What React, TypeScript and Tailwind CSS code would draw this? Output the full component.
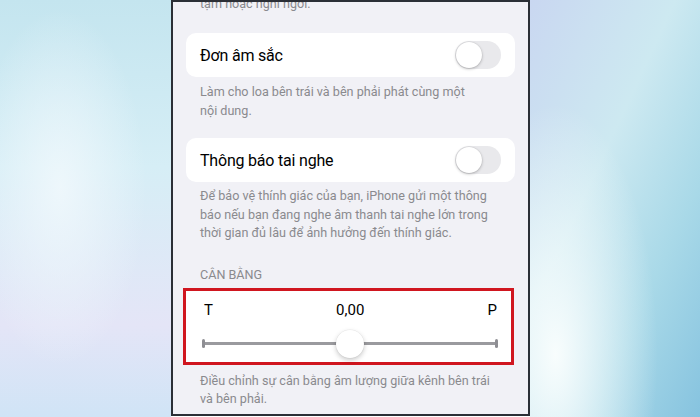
import React from "react";

const font = { fontFamily: "Roboto, 'Noto Sans', 'Liberation Sans', sans-serif" };

function Toggle() {
  return (
    <div className="relative h-[28px] w-[46px] rounded-full bg-[#e9e9ec]">
      <div className="absolute left-[1px] top-[1px] h-[26px] w-[26px] rounded-full bg-white shadow-[0_1px_3px_rgba(0,0,0,0.25),0_0_0_0.5px_rgba(0,0,0,0.06)]" />
    </div>
  );
}

function SwitchCard({ title }: { title: string }) {
  return (
    <div className="mx-[13px] flex h-[44px] items-center justify-between rounded-[10px] bg-white pl-[14px] pr-[14px]">
      <span className="whitespace-nowrap pt-[2px] text-[16px] leading-[20px] tracking-[-0.2px] text-black">{title}</span>
      <Toggle />
    </div>
  );
}

function Note({ children, className = "" }: { children: React.ReactNode; className?: string }) {
  return (
    <p className={`whitespace-nowrap px-[27px] text-[12.6px] leading-[18.5px] text-[#8a8a8e] ${className}`}>{children}</p>
  );
}

function BalanceSlider() {
  return (
    <div className="ml-[10px] mr-[14px] mt-[4px] h-[77px] border-[3px] border-[#d0161f] bg-white">
      <div className="flex items-center justify-between pl-[18px] pr-[14px] pt-[10px] text-[15px] leading-[18px] text-black">
        <span>T</span>
        <span>0,00</span>
        <span>P</span>
      </div>
      <div className="relative ml-[16px] mr-[13px] mt-[11px] flex h-[28px] items-center">
        <div className="h-[9px] w-[3px] rounded-full bg-[#8e8e93]" />
        <div className="h-[3px] flex-1 bg-[#9a9a9e]" />
        <div className="h-[9px] w-[3px] rounded-full bg-[#8e8e93]" />
        <div className="absolute left-1/2 top-0 h-[28px] w-[28px] -translate-x-1/2 rounded-full bg-white shadow-[0_2px_5px_rgba(0,0,0,0.22),0_0_0_0.5px_rgba(0,0,0,0.06)]" />
      </div>
    </div>
  );
}

export default function App() {
  return (
    <div className="flex h-[417px] w-[700px] overflow-hidden" style={font}>
      <div className="h-full w-[171px] bg-[radial-gradient(ellipse_at_35%_45%,rgba(240,248,252,0.9)_0%,rgba(240,248,252,0)_55%),linear-gradient(180deg,#c4e5ef_0%,#d6eef6_40%,#e4e5f7_78%,#d0e4f6_100%)]" />
      <div className="h-[416px] w-[359px] overflow-hidden border-2 border-[#2b2f36] bg-[#f1f1f6]">
        <p className="mt-[-7px] whitespace-nowrap px-[27px] text-[12.6px] leading-[18px] text-[#8a8a8e]">tạm hoặc nghỉ ngơi.</p>
        <div className="mt-[20px]">
          <SwitchCard title="Đơn âm sắc" />
        </div>
        <Note className="mt-[6px]">
          Làm cho loa bên trái và bên phải phát cùng một
          <br />
          nội dung.
        </Note>
        <div className="mt-[18px]">
          <SwitchCard title="Thông báo tai nghe" />
        </div>
        <Note className="mt-[5px]">
          Để bảo vệ thính giác của bạn, iPhone gửi một thông
          <br />
          báo nếu bạn đang nghe âm thanh tai nghe lớn trong
          <br />
          thời gian đủ lâu để ảnh hưởng đến thính giác.
        </Note>
        <p className="mt-[23px] px-[27px] text-[12.6px] leading-[18px] text-[#8a8a8e]">CÂN BẰNG</p>
        <BalanceSlider />
        <Note className="mt-[7px]">
          Điều chỉnh sự cân bằng âm lượng giữa kênh bên trái
          <br />
          và bên phải.
        </Note>
      </div>
      <div className="h-full flex-1 bg-[radial-gradient(ellipse_at_15%_85%,rgba(248,253,253,1)_0%,rgba(248,253,253,0)_50%),linear-gradient(115deg,#c9d7f1_0%,#cde9f1_40%,#a9d9e8_70%,#86c3df_100%)]" />
    </div>
  );
}
